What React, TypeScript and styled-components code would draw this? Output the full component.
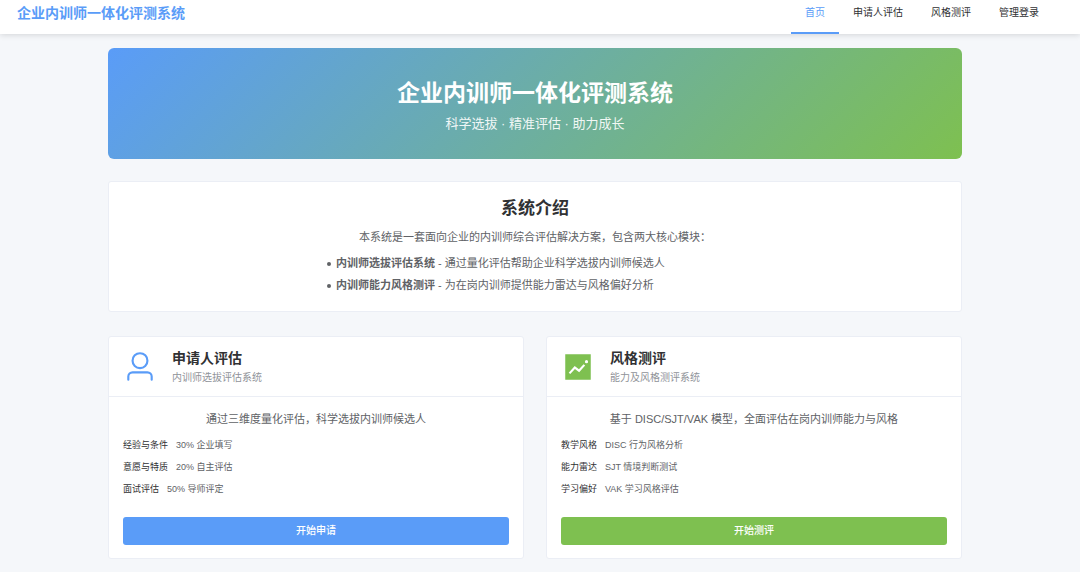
import React from "react";
import styled, { createGlobalStyle } from "styled-components";

const BLUE = "#5a9cf8";
const GREEN = "#7ec050";

const GlobalStyle = createGlobalStyle`
  *, *::before, *::after { box-sizing: border-box; }
  html { background: #f5f7fa; }
  body {
    margin: 0;
    color: #303133;
    font-family: "Liberation Sans", "Noto Sans CJK SC", sans-serif;
  }
  h1, h2, h3, p, ul, dl, dd { margin: 0; padding: 0; }
`;

const Header = styled.header`
  display: flex;
  justify-content: space-between;
  align-items: flex-start;
  height: 34px;
  padding: 0 27px 0 17px;
  background: #fff;
  box-shadow: 0 1px 6px rgba(0, 0, 0, 0.14);
`;

const Brand = styled.a`
  color: ${BLUE};
  font-size: 14px;
  font-weight: 700;
  line-height: 26px;
  text-decoration: none;
`;

const Nav = styled.nav`
  display: flex;
  height: 100%;
`;

const NavLink = styled.a<{ $active?: boolean }>`
  height: 100%;
  padding: 0 14px;
  border-bottom: 2px solid ${(p) => (p.$active ? BLUE : "transparent")};
  color: ${(p) => (p.$active ? BLUE : "#303133")};
  font-size: 10px;
  line-height: 26px;
  text-decoration: none;
`;

const Main = styled.main`
  display: flex;
  flex-direction: column;
  max-width: 882px;
  margin: 0 auto;
  padding: 14px 14px 13px;
`;

const Page = styled.div`
  padding-right: 10px;
`;

const Hero = styled.section`
  padding: 30px 14px 25px;
  border-radius: 6px;
  background: linear-gradient(135deg, ${BLUE} 0%, ${GREEN} 100%);
  color: #fff;
  text-align: center;
`;

const HeroTitle = styled.h1`
  font-size: 23px;
  font-weight: 700;
  line-height: 30px;
`;

const HeroText = styled.p`
  padding-top: 6px;
  font-size: 13px;
  line-height: 20px;
  opacity: 0.9;
`;

const Card = styled.section`
  border: 1px solid #ebeef5;
  border-radius: 3px;
  background: #fff;
`;

const Intro = styled(Card)`
  margin: 22px 0 24px;
  padding: 15px 14px;
`;

const IntroTitle = styled.h2`
  margin-bottom: 7px;
  font-size: 17px;
  font-weight: 700;
  line-height: 24px;
  text-align: center;
`;

const Text = styled.p`
  color: #606266;
  font-size: 11px;
  line-height: 18px;
  text-align: center;
`;

const IntroList = styled.ul`
  max-width: 428px;
  margin: 6px auto 0;
  padding-left: 6px;
  color: #606266;
  font-size: 11px;
  line-height: 22px;
  list-style: none;

  li::before {
    content: "";
    display: inline-block;
    width: 4px;
    height: 4px;
    margin-right: 5px;
    border-radius: 50%;
    background: #606266;
    vertical-align: middle;
  }
`;

const Modules = styled.div`
  display: grid;
  grid-template-columns: 1fr 1fr;
  gap: 22px;
`;

const CardHeader = styled.header`
  display: flex;
  align-items: center;
  gap: 15px;
  padding: 10px 14px;
  border-bottom: 1px solid #ebeef5;
`;

const Icon = styled.svg<{ $color: string }>`
  flex: none;
  width: 34px;
  height: 34px;
  fill: ${(p) => p.$color};
`;

const CardTitle = styled.h3`
  font-size: 14px;
  font-weight: 700;
  line-height: 22px;
`;

const CardSubtitle = styled.p`
  color: #909399;
  font-size: 10px;
  line-height: 17px;
`;

const CardBody = styled.div`
  padding: 13px 14px;
`;

const Facts = styled.dl`
  margin: 6px 0 17px;
`;

const Fact = styled.div`
  display: flex;
  gap: 8px;
  font-size: 9px;
  line-height: 22px;

  dd {
    color: #606266;
  }
`;

const StartButton = styled.button<{ $color: string }>`
  display: block;
  width: 100%;
  height: 28px;
  padding: 0;
  border: 0;
  border-radius: 3px;
  background: ${(p) => p.$color};
  color: #fff;
  font: 500 10px/28px "Liberation Sans", "Noto Sans CJK SC", sans-serif;
  cursor: pointer;
`;

const USER_PATH =
  "M512 512a192 192 0 1 0 0-384 192 192 0 0 0 0 384m0 64a256 256 0 1 1 0-512 256 256 0 0 1 0 512m320 320v-96a96 96 0 0 0-96-96H288a96 96 0 0 0-96 96v96a32 32 0 1 1-64 0v-96a160 160 0 0 1 160-160h448a160 160 0 0 1 160 160v96a32 32 0 1 1-64 0";
const TREND_PATH =
  "M128 896V128h768v768zm291.712-327.296 128 102.4 180.16-201.792-47.744-42.624-139.84 156.608-128-102.4-180.16 201.792 47.744 42.624 139.84-156.608zM816 352a48 48 0 1 0-96 0 48 48 0 0 0 96 0";

const navItems = ["首页", "申请人评估", "风格测评", "管理登录"];

const modules = [
  {
    title: "申请人评估",
    subtitle: "内训师选拔评估系统",
    color: BLUE,
    icon: USER_PATH,
    text: "通过三维度量化评估，科学选拔内训师候选人",
    facts: [
      ["经验与条件", "30% 企业填写"],
      ["意愿与特质", "20% 自主评估"],
      ["面试评估", "50% 导师评定"],
    ],
    action: "开始申请",
  },
  {
    title: "风格测评",
    subtitle: "能力及风格测评系统",
    color: GREEN,
    icon: TREND_PATH,
    text: "基于 DISC/SJT/VAK 模型，全面评估在岗内训师能力与风格",
    facts: [
      ["教学风格", "DISC 行为风格分析"],
      ["能力雷达", "SJT 情境判断测试"],
      ["学习偏好", "VAK 学习风格评估"],
    ],
    action: "开始测评",
  },
];

export default function App() {
  return (
    <div lang="zh-CN">
      <GlobalStyle />
      <Header>
        <Brand href="#">企业内训师一体化评测系统</Brand>
        <Nav>
          {navItems.map((item, i) => (
            <NavLink key={item} href="#" $active={i === 0}>
              {item}
            </NavLink>
          ))}
        </Nav>
      </Header>
      <Page>
        <Main>
          <Hero>
            <HeroTitle>企业内训师一体化评测系统</HeroTitle>
            <HeroText>科学选拔 · 精准评估 · 助力成长</HeroText>
          </Hero>
          <Intro>
            <IntroTitle>系统介绍</IntroTitle>
            <Text>本系统是一套面向企业的内训师综合评估解决方案，包含两大核心模块：</Text>
            <IntroList>
              <li>
                <strong>内训师选拔评估系统</strong> - 通过量化评估帮助企业科学选拔内训师候选人
              </li>
              <li>
                <strong>内训师能力风格测评</strong> - 为在岗内训师提供能力雷达与风格偏好分析
              </li>
            </IntroList>
          </Intro>
          <Modules>
            {modules.map((m) => (
              <Card key={m.title}>
                <CardHeader>
                  <Icon viewBox="0 0 1024 1024" $color={m.color} aria-hidden="true">
                    <path d={m.icon} />
                  </Icon>
                  <div>
                    <CardTitle>{m.title}</CardTitle>
                    <CardSubtitle>{m.subtitle}</CardSubtitle>
                  </div>
                </CardHeader>
                <CardBody>
                  <Text>{m.text}</Text>
                  <Facts>
                    {m.facts.map(([label, value]) => (
                      <Fact key={label}>
                        <dt>{label}</dt>
                        <dd>{value}</dd>
                      </Fact>
                    ))}
                  </Facts>
                  <StartButton type="button" $color={m.color}>
                    {m.action}
                  </StartButton>
                </CardBody>
              </Card>
            ))}
          </Modules>
        </Main>
      </Page>
    </div>
  );
}
